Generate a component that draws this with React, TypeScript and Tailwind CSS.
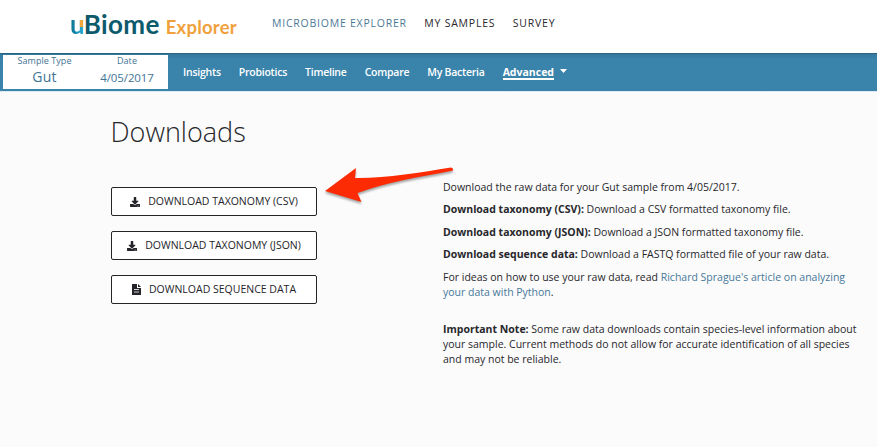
import { FaDownload } from "react-icons/fa";
import type { ReactNode } from "react";

function Logo() {
  return (
    <a className="ml-[70px] flex h-[36px] items-baseline whitespace-nowrap font-['Lato',sans-serif]">
      <span className="text-[26px] leading-[36px] font-bold text-[#0c5a6c]">
        <span className="mr-[-1px] bg-[linear-gradient(to_bottom,#f2a63b_60%,transparent_60%),linear-gradient(to_right,#0b6c88,#1793bd_50%,#35b7dc)] bg-[length:50%_100%,100%_100%] bg-[position:right,left] bg-no-repeat bg-clip-text text-transparent">u</span>
        <span className="tracking-[0.4px]">Biome</span>
      </span>
      <span className="ml-[6px] text-[18.5px] font-bold tracking-[0.2px] text-[#f0a13c]">Explorer</span>
    </a>
  );
}

function DownloadButton({ icon, children }: { icon: ReactNode; children: ReactNode }) {
  return (
    <button className="flex h-[29px] w-[206px] items-center justify-center gap-[8px] rounded-[2px] border border-[#242429] bg-white text-[10.5px] whitespace-nowrap text-[#242429]">
      {icon}
      <span>{children}</span>
    </button>
  );
}

function FileIcon() {
  return (
    <svg width="9" height="11" viewBox="0 0 9 11" fill="#242429">
      <path d="M0 .5A.5.5 0 0 1 .5 0H5V4H9V10.5A.5.5 0 0 1 8.5 11H.5A.5.5 0 0 1 0 10.5Z" />
      <path d="M6 0L9 3H6Z" />
      <path d="M2 5.5H7M2 8H7" stroke="white" strokeWidth=".8" />
    </svg>
  );
}

export default function App() {
  return (
    <div className="relative h-[447px] w-[877px] overflow-hidden bg-[#fbfbfb] font-['Open_Sans',sans-serif] text-[#27272b]">
      <header className="flex h-[53px] items-start bg-white pt-[6px]">
        <div className="w-[272px]"><Logo /></div>
        <nav className="flex gap-[17.5px] text-[10.5px] leading-[34px] tracking-[0.77px] whitespace-nowrap">
          <a className="text-[#4c7896]">MICROBIOME EXPLORER</a>
          <a>MY SAMPLES</a>
          <a>SURVEY</a>
        </nav>
      </header>
      <div className="flex h-[38px] border-t border-[#2b6482] bg-linear-to-b from-[#34779b] to-[#3a83ab] to-[5px] pl-[3px]">
        <div className="mt-[1px] flex h-[34px] w-[165px] bg-white text-center text-[#3f7495]">
          <div className="w-[83px]">
            <div className="text-[9px] leading-[12px] tracking-[0.05px]">Sample Type</div>
            <div className="text-[14px] leading-[20px] tracking-[0.2px]">Gut</div>
          </div>
          <div className="w-[82px]">
            <div className="text-[9px] leading-[12px] tracking-[0.1px]">Date</div>
            <div className="text-[11.5px] leading-[22px] tracking-[-0.1px]">4/05/2017</div>
          </div>
        </div>
        <nav className="ml-[15px] flex gap-[18px] text-[10.5px] leading-[36px] font-semibold tracking-[-0.24px] whitespace-nowrap text-white">
          <a>Insights</a>
          <a>Probiotics</a>
          <a>Timeline</a>
          <a>Compare</a>
          <a>My Bacteria</a>
          <a className="flex items-center font-bold tracking-[0px]">
            <span className="h-[15px] border-b-2 border-white leading-[15px]">Advanced</span>
            <svg className="mb-[3px] ml-[6px]" width="7" height="4" viewBox="0 0 7 4" fill="white"><path d="M0 0H7L3.500 4Z" /></svg>
          </a>
        </nav>
      </div>
      <main className="flex border-t border-[#dceaf2] pl-[110.500px]">
        <section className="w-[332.500px]">
          <h1 className="mt-[22px] text-[27px] leading-[36px] font-light">Downloads</h1>
          <div className="mt-[37px] ml-[0.5px] flex flex-col gap-[15px]">
            <DownloadButton icon={<FaDownload className="size-[10px]" />}>DOWNLOAD TAXONOMY (CSV)</DownloadButton>
            <DownloadButton icon={<FaDownload className="size-[10px]" />}>DOWNLOAD TAXONOMY (JSON)</DownloadButton>
            <DownloadButton icon={<FileIcon />}>DOWNLOAD SEQUENCE DATA</DownloadButton>
          </div>
        </section>
        <section className="mt-[87.5px] flex flex-col gap-[7.5px] text-[10.5px] leading-[15px] whitespace-nowrap">
          <p>Download the raw data for your Gut sample from 4/05/2017.</p>
          <p><b>Download taxonomy (CSV):</b> Download a CSV formatted taxonomy file.</p>
          <p><b>Download taxonomy (JSON):</b> Download a JSON formatted taxonomy file.</p>
          <p><b>Download sequence data:</b> Download a FASTQ formatted file of your raw data.</p>
          <p>
            For ideas on how to use your raw data, read <a className="text-[#47789a]">Richard Sprague's article on analyzing<br />your data with Python</a>.
          </p>
          <p className="mt-[14.5px]">
            <b>Important Note:</b> Some raw data downloads contain species-level information about<br />
            your sample. Current methods do not allow for accurate identification of all species<br />
            and may not be reliable.
          </p>
        </section>
      </main>
      <svg className="absolute top-[160px] left-[315px] drop-shadow-[0_2px_1px_rgba(0,0,0,0.35)]" width="150" height="50" viewBox="315 160 150 50" aria-hidden="true">
        <path d="M325 191L356 168L355 178C385 178.500 420 172.500 451 167.500Q453.500 168 453 170.500C420 177 387 182 357.500 193L361.500 202Z" fill="#fd2b03" />
      </svg>
    </div>
  );
}
